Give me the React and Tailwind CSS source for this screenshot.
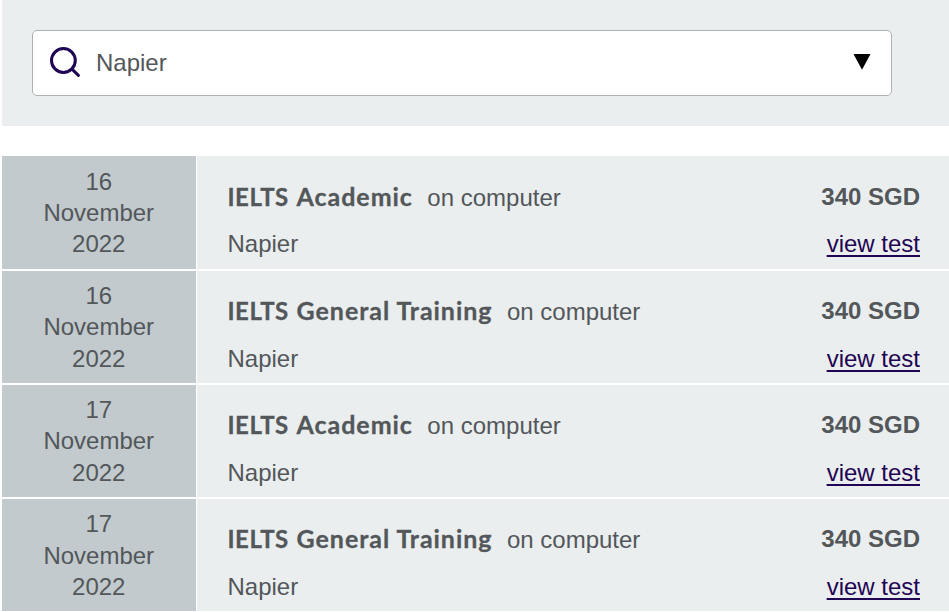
const tests = [
  { day: '16', title: 'Academic' },
  { day: '16', title: 'General Training' },
  { day: '17', title: 'Academic' },
  { day: '17', title: 'General Training' },
];

function SearchBox() {
  return (
    <div className="bg-[#eaeeef] h-[126px] pt-[30px] pl-[30px]">
      <div className="flex items-center w-[860px] h-[66px] bg-white border border-[#adb3b4] rounded-[5px] pl-[16px] pr-[20px]">
        <svg className="w-8 h-8 shrink-0" viewBox="0 0 32 32" fill="none" stroke="#1f0553" strokeWidth="3" strokeLinecap="round">
          <circle cx="14.4" cy="13.5" r="11.9" />
          <path d="M23 22.2 29.4 28.4" />
        </svg>
        <span className="ml-[15px] grow">Napier</span>
        <svg className="w-[18px] h-[16px] mb-[2px]" viewBox="0 0 18 16">
          <path d="M0.5 0h17L9 15.7z" fill="#000" />
        </svg>
      </div>
    </div>
  );
}

function TestRow({ day, title }) {
  return (
    <div className="flex gap-px h-[112.2px]">
      <div className="w-[194px] shrink-0 bg-[#c2cacd] text-center pt-[9.2px] pr-[0.5px]">
        <div>{day}</div>
        <div>November</div>
        <div>2022</div>
      </div>
      <div className="grow bg-[#eaeeef] flex justify-between pl-[30.5px] pr-[29px] pt-[24.5px]">
        <div>
          <div className="flex items-baseline">
            <span className="font-['Lato',sans-serif] font-bold whitespace-nowrap tracking-[0.5px] [-webkit-text-stroke:0.3px_#53575a]">
              IELTS <span className="ml-[1.5px] text-[25px] tracking-[0.95px]">{title}</span>
            </span>
            <span className="ml-[14.5px]">on computer</span>
          </div>
          <div className="mt-[15.1px]">Napier</div>
        </div>
        <div className="text-right">
          <div className="font-bold">340 SGD</div>
          <a className="block mt-[16.2px] text-[#1f0553] underline decoration-2 underline-offset-[3px]">view test</a>
        </div>
      </div>
    </div>
  );
}

export default function App() {
  return (
    <div className="w-[949px] h-[612px] overflow-hidden bg-white pl-[2px] font-['Liberation_Sans',Arial,sans-serif] text-[24px] leading-[31.4px] text-[#53575a]">
      <SearchBox />
      <div className="mt-[30.4px] flex flex-col gap-[2px]">
        {tests.map((test, i) => (
          <TestRow key={i} day={test.day} title={test.title} />
        ))}
      </div>
    </div>
  );
}
